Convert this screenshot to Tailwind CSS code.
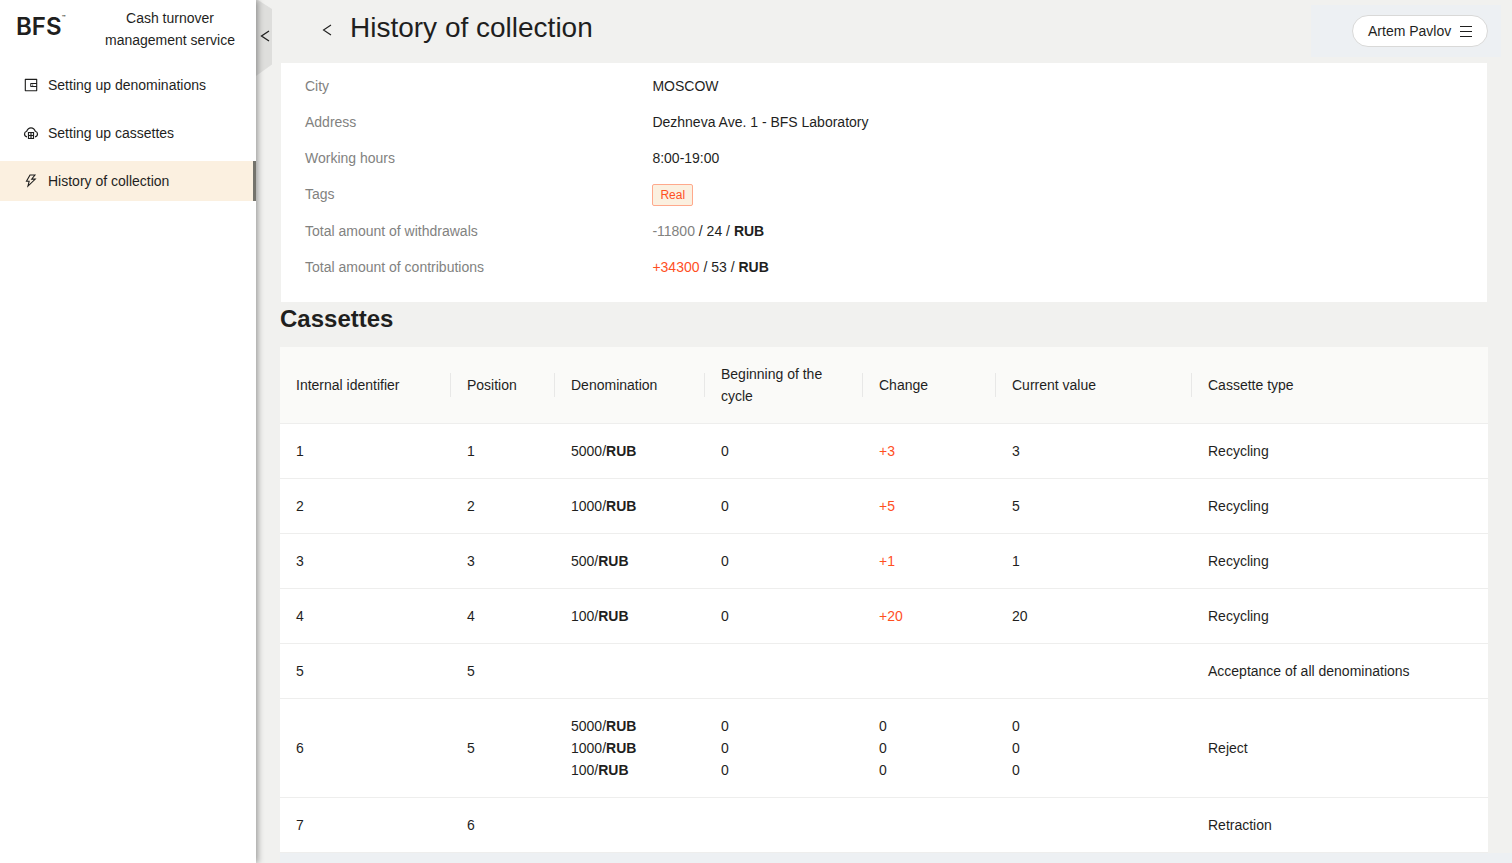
<!DOCTYPE html>
<html lang="en">
<head>
<meta charset="utf-8">
<title>History of collection</title>
<script src="https://cdn.jsdelivr.net/npm/@tailwindcss/browser@4"></script>
</head>
<body class="bg-[#f1f1ef] font-['Liberation_Sans',Arial,sans-serif] text-sm/[22px] text-[#1f1f1e]">
<div class="flex min-h-screen">
  <aside class="relative z-10 w-64 shrink-0 bg-white shadow-[2px_0_6px_rgba(0,0,0,0.35)]">
    <div class="flex items-start justify-between pt-[7px] pr-5 pl-4">
      <div class="relative pt-1 font-[Inter,sans-serif] text-2xl/8 font-semibold">BFS<span class="absolute top-2 -right-1 text-[6px]/[6px]">™</span></div>
      <p class="w-[132px] text-center">Cash turnover management service</p>
    </div>
    <nav class="mt-[14px] flex flex-col gap-2">
      <a href="#" class="flex h-10 items-center gap-[9px] pl-[23px]">
        <svg class="size-4" viewBox="0 0 1024 1024" fill="currentColor"><path d="M880 112H144c-17.700 0-32 14.300-32 32v736c0 17.700 14.300 32 32 32h736c17.700 0 32-14.300 32-32V144c0-17.700-14.300-32-32-32zm-40 464H528V448h312v128zm0 264H184V184h656v200H496c-17.700 0-32 14.300-32 32v192c0 17.700 14.300 32 32 32h344v200zM580 512a40 40 0 1 0 80 0 40 40 0 1 0-80 0z"/></svg>
        Setting up denominations</a>
      <a href="#" class="flex h-10 items-center gap-[9px] pl-[23px]">
        <svg class="size-4" viewBox="0 0 16 16" fill="none" stroke="currentColor" stroke-width="1.200"><path d="M4 11.800C2.500 11.500 1.500 10.400 1.500 9c0-1.400.9-2.400 2.200-2.800C4.500 4 6 2.800 8 2.800S11.500 4 12.300 6.200c1.300.4 2.200 1.400 2.200 2.800s-1 2.500-2.500 2.800"/><path d="M5.500 7.500h5v6h-5zM5.500 10.500h5M8 7.500v6"/></svg>
        Setting up cassettes</a>
      <a href="#" aria-current="page" class="flex h-10 items-center gap-[9px] border-r-3 border-[#74736c] bg-[#fbf0e0] pl-[23px]">
        <svg class="size-4" viewBox="0 0 1024 1024" fill="currentColor"><path d="M848 359.300H627.700L825.800 109c4.100-5.300.4-13-6.300-13H436c-2.800 0-5.500 1.500-6.900 4L170 547.500c-3.100 5.300.7 12 6.900 12h174.400l-89.400 357.600c-1.900 7.800 7.500 13.300 13.300 7.700L853.500 373c5.200-4.900 1.700-13.700-5.500-13.700zM378.200 732.500l60.300-241H281.100l189.600-327.400h224.600L487 427.400h211L378.200 732.500z"/></svg>
        History of collection</a>
    </nav>
    <button type="button" aria-label="Collapse menu" class="absolute top-0 left-full h-[76px] w-4 bg-black/8 pl-1 [clip-path:polygon(0_0,12%_0,100%_12%,100%_85%,0_100%)]">
      <svg class="-mt-1 h-3 w-[10px]" viewBox="0 0 10 12" fill="none" stroke="currentColor" stroke-width="1.300"><path d="M9 1 1.500 6 9 11"/></svg>
    </button>
  </aside>

  <div class="flex min-w-0 grow flex-col">
    <header class="flex h-[63px] items-start justify-between pt-[5px] pr-[11px] pl-[61px]">
      <div class="flex items-center gap-[13px]">
        <a href="#" aria-label="Back" class="flex w-5 justify-center"><svg class="mt-1 h-3 w-[10px]" viewBox="0 0 10 12" fill="none" stroke="currentColor" stroke-width="1.100"><path d="M9 1 1.500 6 9 11"/></svg></a>
        <h1 class="text-[28px]/[46px]">History of collection</h1>
      </div>
      <div class="flex h-[52px] items-center bg-[#edf0f3] pr-[13px] pl-[41px]">
        <button type="button" class="flex h-8 w-[136px] items-center justify-between rounded-full border border-[#d9d9d8] bg-white px-[15px] whitespace-nowrap">Artem Pavlov
          <svg class="h-[13px] w-3" viewBox="0 0 12 13" fill="currentColor"><path d="M0 1h12v1H0zM0 6h12v1H0zM0 11h12v1H0z"/></svg></button>
      </div>
    </header>

    <main class="mx-6">
      <dl class="mx-px grid grid-cols-[30%_1fr] gap-y-[14px] bg-white px-6 pt-3 pb-6">
        <dt class="text-[#82827f]">City</dt><dd>MOSCOW</dd>
        <dt class="text-[#82827f]">Address</dt><dd>Dezhneva Ave. 1 - BFS Laboratory</dd>
        <dt class="text-[#82827f]">Working hours</dt><dd>8:00-19:00</dd>
        <dt class="text-[#82827f]">Tags</dt><dd class="flex pt-px"><span class="rounded-xs border border-[#ffa98c] bg-[#fbf0e0] px-[7px] text-xs/5 text-[#ff4f1f]">Real</span></dd>
        <dt class="text-[#82827f]">Total amount of withdrawals</dt><dd><span class="text-[#82827f]">-11800</span> / 24 / <b>RUB</b></dd>
        <dt class="text-[#82827f]">Total amount of contributions</dt><dd><span class="text-[#ff4f1f]">+34300</span> / 53 / <b>RUB</b></dd>
      </dl>

      <h2 class="mb-[11px] text-2xl/[34px] font-bold">Cassettes</h2>

      <table class="w-full table-fixed bg-white text-left [&_td]:p-4 [&_th]:relative [&_th]:p-4 [&_th]:font-normal [&_tr]:border-b [&_tr]:border-[#eeeeed]">
        <colgroup><col class="w-[171px]"><col class="w-[104px]"><col class="w-[150px]"><col class="w-[158px]"><col class="w-[133px]"><col class="w-[196px]"><col></colgroup>
        <thead class="bg-[#fafaf8] [&_th:not(:last-child)]:after:absolute [&_th:not(:last-child)]:after:top-1/2 [&_th:not(:last-child)]:after:right-0 [&_th:not(:last-child)]:after:h-6 [&_th:not(:last-child)]:after:w-px [&_th:not(:last-child)]:after:-translate-y-1/2 [&_th:not(:last-child)]:after:bg-[#e8e8e7] [&_th:not(:last-child)]:after:content-['']">
          <tr><th>Internal identifier</th><th>Position</th><th>Denomination</th><th>Beginning of the cycle</th><th>Change</th><th>Current value</th><th>Cassette type</th></tr>
        </thead>
        <tbody>
          <tr><td>1</td><td>1</td><td>5000/<b>RUB</b></td><td>0</td><td class="text-[#ff4f1f]">+3</td><td>3</td><td>Recycling</td></tr>
          <tr><td>2</td><td>2</td><td>1000/<b>RUB</b></td><td>0</td><td class="text-[#ff4f1f]">+5</td><td>5</td><td>Recycling</td></tr>
          <tr><td>3</td><td>3</td><td>500/<b>RUB</b></td><td>0</td><td class="text-[#ff4f1f]">+1</td><td>1</td><td>Recycling</td></tr>
          <tr><td>4</td><td>4</td><td>100/<b>RUB</b></td><td>0</td><td class="text-[#ff4f1f]">+20</td><td>20</td><td>Recycling</td></tr>
          <tr><td>5</td><td>5</td><td></td><td></td><td></td><td></td><td>Acceptance of all denominations</td></tr>
          <tr><td>6</td><td>5</td><td>5000/<b>RUB</b><br>1000/<b>RUB</b><br>100/<b>RUB</b></td><td>0<br>0<br>0</td><td>0<br>0<br>0</td><td>0<br>0<br>0</td><td>Reject</td></tr>
          <tr><td>7</td><td>6</td><td></td><td></td><td></td><td></td><td>Retraction</td></tr>
        </tbody>
      </table>
    </main>
    <div class="ml-6 grow bg-[#edf0f3]"></div>
  </div>
</div>
</body>
</html>
